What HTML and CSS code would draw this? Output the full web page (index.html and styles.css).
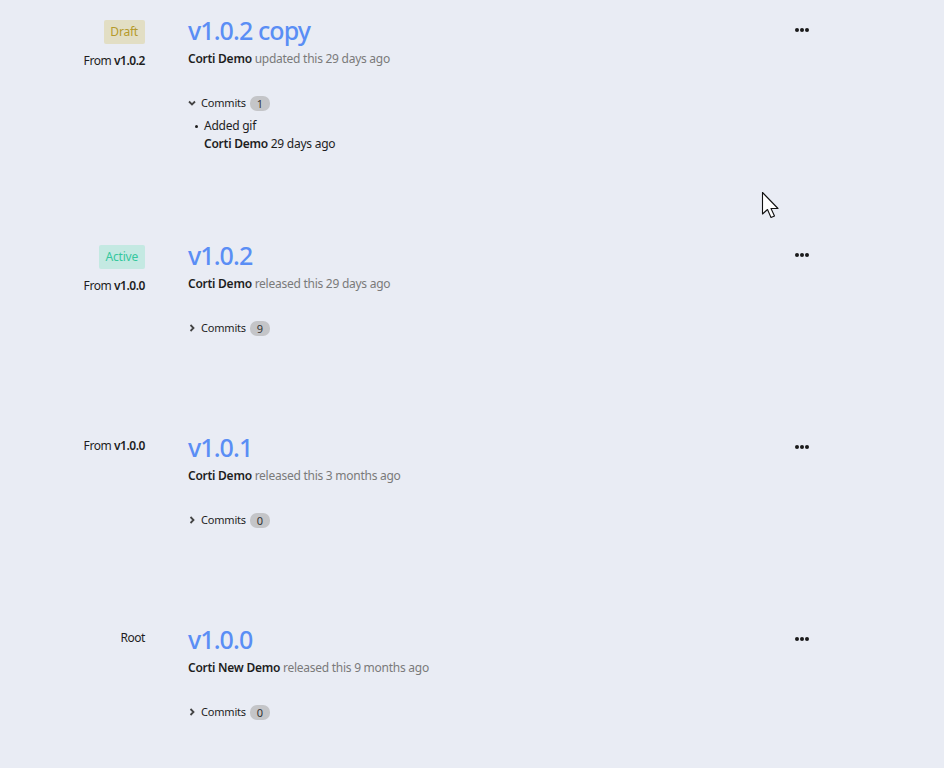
FILE: index.html
```html
<!DOCTYPE html>
<html>
<head>
<meta charset="utf-8">
<link rel="stylesheet" href="styles.css">
</head>
<body>
<div class="list">
  <div class="release">
    <div class="side">
      <span class="badge draft">Draft</span>
      <div class="from">From <b>v1.0.2</b></div>
    </div>
    <div class="main">
      <div class="head">
        <h2 class="title">v1.0.2 copy</h2>
        <svg class="dots" width="14" height="4" viewBox="0 0 14 4"><circle cx="2" cy="2" r="2"/><circle cx="7" cy="2" r="2"/><circle cx="12" cy="2" r="2"/></svg>
      </div>
      <div class="meta"><b>Corti Demo</b> updated this 29 days ago</div>
      <div class="commits"><svg class="chev" width="8" height="8" viewBox="0 0 8 8"><path d="M1 2.5 L4 5.5 L7 2.5" fill="none" stroke="#444" stroke-width="1.8"/></svg>Commits <span class="count">1</span></div>
      <ul class="clist">
        <li>Added gif<div><b>Corti Demo</b> 29 days ago</div></li>
      </ul>
    </div>
  </div>

  <div class="release">
    <div class="side">
      <span class="badge active">Active</span>
      <div class="from">From <b>v1.0.0</b></div>
    </div>
    <div class="main">
      <div class="head">
        <h2 class="title">v1.0.2</h2>
        <svg class="dots" width="14" height="4" viewBox="0 0 14 4"><circle cx="2" cy="2" r="2"/><circle cx="7" cy="2" r="2"/><circle cx="12" cy="2" r="2"/></svg>
      </div>
      <div class="meta"><b>Corti Demo</b> released this 29 days ago</div>
      <div class="commits"><svg class="chev" width="8" height="8" viewBox="0 0 8 8"><path d="M2.5 1 L5.5 4 L2.5 7" fill="none" stroke="#444" stroke-width="1.8"/></svg>Commits <span class="count">9</span></div>
    </div>
  </div>

  <div class="release">
    <div class="side">
      <div class="from">From <b>v1.0.0</b></div>
    </div>
    <div class="main">
      <div class="head">
        <h2 class="title">v1.0.1</h2>
        <svg class="dots" width="14" height="4" viewBox="0 0 14 4"><circle cx="2" cy="2" r="2"/><circle cx="7" cy="2" r="2"/><circle cx="12" cy="2" r="2"/></svg>
      </div>
      <div class="meta"><b>Corti Demo</b> released this 3 months ago</div>
      <div class="commits"><svg class="chev" width="8" height="8" viewBox="0 0 8 8"><path d="M2.5 1 L5.5 4 L2.5 7" fill="none" stroke="#444" stroke-width="1.8"/></svg>Commits <span class="count">0</span></div>
    </div>
  </div>

  <div class="release">
    <div class="side">
      <div class="from">Root</div>
    </div>
    <div class="main">
      <div class="head">
        <h2 class="title">v1.0.0</h2>
        <svg class="dots" width="14" height="4" viewBox="0 0 14 4"><circle cx="2" cy="2" r="2"/><circle cx="7" cy="2" r="2"/><circle cx="12" cy="2" r="2"/></svg>
      </div>
      <div class="meta"><b>Corti New Demo</b> released this 9 months ago</div>
      <div class="commits"><svg class="chev" width="8" height="8" viewBox="0 0 8 8"><path d="M2.5 1 L5.5 4 L2.5 7" fill="none" stroke="#444" stroke-width="1.8"/></svg>Commits <span class="count">0</span></div>
    </div>
  </div>
</div>
<svg class="cursor" width="22" height="30" viewBox="0 0 22 30"><path d="M1.5 1.5 L1.5 23 L6.5 18.5 L10 26.5 L13.5 25 L10 17.5 L17 17.5 Z" fill="#fff" stroke="#111" stroke-width="1.1" stroke-linejoin="round"/></svg>
</body>
</html>
```

FILE: styles.css
```css
html, body {
  margin: 0;
  padding: 0;
  background: #e9ecf4;
}
body {
  font-family: "Noto Sans", "Open Sans", sans-serif;
  color: #1e1e1e;
  width: 944px;
  height: 768px;
  overflow: hidden;
  position: relative;
}
.list {
  padding-top: 14px;
  width: 810px;
}
.release {
  display: flex;
  gap: 43px;
  padding-bottom: 86px;
}
.release:last-child {
  padding-bottom: 0;
}
.side {
  width: 145px;
  flex: none;
  padding-top: 6px;
  display: flex;
  flex-direction: column;
  align-items: flex-end;
}
.badge {
  display: inline-block;
  height: 24px;
  line-height: 24px;
  padding: 0 7px 0 6px;
  border-radius: 2px;
  font-size: 12px;
  margin-bottom: 8px;
  letter-spacing: -0.2px;
}
.badge.draft {
  background: #e2dec4;
  color: #b59a2a;
}
.badge.active {
  background: #c4e9e2;
  color: #35c79d;
}
.from {
  font-size: 12px;
  line-height: 18px;
  color: #1e1e1e;
  letter-spacing: -0.45px;
}
.from b { font-weight: 600; }
.main {
  flex: 1;
}
.head {
  display: flex;
  justify-content: space-between;
  align-items: center;
  height: 32px;
}
.title {
  margin: 0;
  font-size: 25px;
  font-weight: 500;
  color: #5a8ef5;
  line-height: 32px;
  letter-spacing: -0.9px;
}
.dots {
  fill: #1a1a1a;
  margin-right: 1px;
}
.meta {
  margin-top: 4px;
  font-size: 12px;
  line-height: 18px;
  color: #7a7a7a;
  letter-spacing: -0.26px;
}
.meta b {
  font-weight: 600;
  color: #1e1e1e;
}
.commits {
  margin-top: 26px;
  margin-bottom: 8px;
  display: flex;
  align-items: center;
  font-size: 11px;
  line-height: 18px;
  color: #1e1e1e;
  letter-spacing: -0.2px;
}
.chev {
  margin-right: 5px;
}
.count {
  display: inline-block;
  margin-left: 4px;
  background: #c4c5c8;
  color: #333;
  border-radius: 7px;
  height: 15px;
  line-height: 15px;
  padding: 0 7px;
  font-size: 11px;
}
.clist {
  margin: -3px 0 0 0;
  padding: 0 0 0 16px;
  font-size: 12px;
  line-height: 18px;
  list-style: none;
  letter-spacing: -0.25px;
}
.clist li {
  position: relative;
}
.clist li::before {
  content: "";
  position: absolute;
  left: -9px;
  top: 8px;
  width: 3px;
  height: 3px;
  border-radius: 50%;
  background: #1e1e1e;
}
.clist b { font-weight: 600; }
.cursor {
  position: absolute;
  left: 761px;
  top: 191px;
}
```
